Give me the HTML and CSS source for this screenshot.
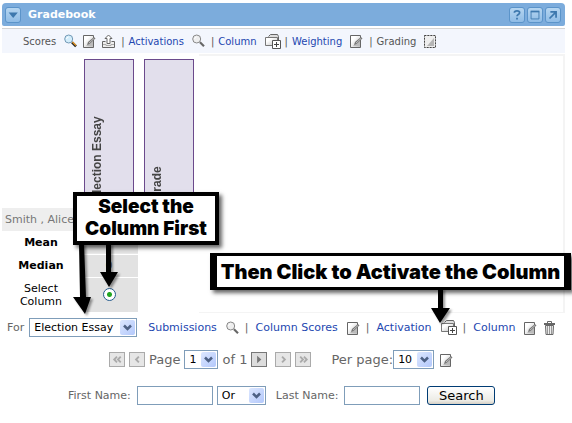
FILE: index.html
```html
<!DOCTYPE html>
<html lang="en">
<head>
<meta charset="utf-8">
<title>Gradebook</title>
<link rel="stylesheet" href="styles.css">
</head>
<body>
<svg class="defs" aria-hidden="true">
  <defs>
    <linearGradient id="sheen" x1="0" y1="0" x2="1" y2="1"><stop offset="0.3" stop-color="#fff"/><stop offset="1" stop-color="#bbb"/></linearGradient>
    <symbol id="find" viewBox="0 0 13 14"><circle cx="4.7" cy="5" r="4" fill="#eee" stroke="#888"/><path d="M2.5 5a2.5 2.5 0 0 1 2-2" fill="none" stroke="#fff"/><path d="M8 8.300l4 4" stroke="#666" stroke-width="2.200"/></symbol>
    <symbol id="find-color" viewBox="0 0 13 14"><circle cx="4.700" cy="5" r="4" fill="#d3edfb" stroke="#7399b5"/><path d="M2.500 5a2.500 2.500 0 0 1 2-2" fill="none" stroke="#fff"/><path d="M8 8.300l4 4" stroke="#222" stroke-width="2.400"/><path d="M8.500 8l3.500 3.500" stroke="#e89a28" stroke-width="1.300"/></symbol>
    <symbol id="edit" viewBox="0 0 13 14"><path d="M.5 1.500h10v12h-10z" fill="url(#sheen)" stroke="#666"/><path d="M3 12l7-7v7z" fill="#bbb"/><path d="M4 11l1-3 6-5 1.500 1.500-6 5.500z" fill="#777"/><path d="M6 9l5-4.500" stroke="#ddd" stroke-width=".7"/></symbol>
    <symbol id="edit-off" viewBox="0 0 13 14"><path d="M.5 1.500h11v12h-11z" fill="#eee" stroke="#aaa"/><path d="M.5 1.500h11v12h-11z" fill="none" stroke="#444" stroke-dasharray="1.500 1.500"/><path d="M3 12l7-8v8z" fill="#b5b5b5"/></symbol>
    <symbol id="export" viewBox="0 0 13 14"><path d="M3.500 7.500h-3v6h12v-6h-3" fill="#eee" stroke="#666"/><path d="M1 10.500h3v1h5v-1h3" fill="none" stroke="#aaa"/><path d="M5 9.500v-5H3L6.500 1 10 4.500H8v5z" fill="#fff" stroke="#666"/></symbol>
    <symbol id="add-column" viewBox="0 0 16 15"><path d="M3.500 2.500l2-2h7l1 2v6" fill="#ddd" stroke="#666"/><path d="M.5 3.500h12v8H.5z" fill="url(#sheen)" stroke="#777"/><path d="M7.500 6.500h8v8h-8z" fill="#fff" stroke="#555"/><path d="M11.500 8v5M9 10.500h5" stroke="#444"/></symbol>
    <symbol id="trash" viewBox="0 0 11 14"><path d="M1.500 4.500h8l-.5 9H2z" fill="#eee" stroke="#666"/><path d="M0 3h11" stroke="#666" stroke-width="2"/><path d="M3.500 2.500v-2h4v2" fill="none" stroke="#666"/><path d="M3.500 5v8M5.500 5v8M7.500 5v8" stroke="#999"/></symbol>
    <symbol id="chevron" viewBox="0 0 15 15"><path d="M4 5.500l3.500 3.500L11 5.500" fill="none" stroke="#4d6185" stroke-width="2.500"/></symbol>
  </defs>
</svg>
<main class="gradebook">
  <header class="titlebar">
    <button class="tile" aria-label="Menu"><svg viewBox="0 0 16 16"><path d="M3 5h10.500L8.200 11.500z" fill="#3d78ae"/></svg></button>
    <h1>Gradebook</h1>
    <button class="tile" aria-label="Help"><svg viewBox="0 0 16 16"><path d="M5 5.500c0-3 6-3 6 0 0 2-3 2-3 4M8 11v2" fill="none" stroke="#3d78ae" stroke-width="2"/></svg></button>
    <button class="tile" aria-label="Maximize"><svg viewBox="0 0 16 16"><path d="M3.500 4v8.500h9V4" fill="none" stroke="#3d78ae"/><path d="M3 4h10" stroke="#3d78ae" stroke-width="2"/></svg></button>
    <button class="tile" aria-label="Open in window"><svg viewBox="0 0 16 16"><path d="M5 4.500h6.500V11M11 5l-7 7" fill="none" stroke="#3d78ae" stroke-width="2"/></svg></button>
  </header>

  <nav class="toolbar">
    <span>Scores</span>
    <svg class="icon"><use href="#find-color"/></svg>
    <svg class="icon"><use href="#edit"/></svg>
    <svg class="icon"><use href="#export"/></svg>
    <span class="bar">|</span><a href="#">Activations</a>
    <svg class="icon"><use href="#find"/></svg>
    <span class="bar">|</span><a href="#">Column</a>
    <svg class="icon wide"><use href="#add-column"/></svg>
    <span class="bar">|</span><a href="#">Weighting</a>
    <svg class="icon"><use href="#edit"/></svg>
    <span class="bar">|</span><span>Grading</span>
    <svg class="icon"><use href="#edit-off"/></svg>
  </nav>

  <section class="grades">
    <table>
      <thead>
        <tr><td></td><th><div class="column-head">Election Essay</div></th><th><div class="column-head">Grade</div></th></tr>
      </thead>
      <tbody>
        <tr class="student"><th>Smith , Alice</th><td></td><td></td></tr>
        <tr><th>Mean</th><td class="shade"></td><td></td></tr>
        <tr><th>Median</th><td class="shade">0</td><td></td></tr>
        <tr class="pick"><th><label for="pick">Select<br>Column</label></th><td class="shade"><input type="radio" id="pick" checked></td><td></td></tr>
      </tbody>
    </table>
    <div class="scroll-area"></div>
  </section>

  <div class="actions">
    <label for="for">For</label>
    <span class="select essay"><select id="for"><option>Election Essay</option></select><svg><use href="#chevron"/></svg></span>
    <a class="first" href="#">Submissions</a>
    <svg class="icon"><use href="#find"/></svg>
    <span>|</span><a href="#">Column Scores</a>
    <svg class="icon"><use href="#edit"/></svg>
    <span>|</span><a href="#">Activation</a>
    <svg class="icon wide"><use href="#add-column"/></svg>
    <span>|</span><a href="#">Column</a>
    <svg class="icon"><use href="#edit"/></svg>
    <svg class="icon"><use href="#trash"/></svg>
  </div>

  <div class="pager">
    <button class="step" aria-label="First page" disabled><svg viewBox="0 0 14 14"><path d="M7 4L4 7l3 3M11 4L8 7l3 3"/></svg></button>
    <button class="step" aria-label="Previous page" disabled><svg viewBox="0 0 14 14"><path d="M9 4L6 7l3 3"/></svg></button>
    <label for="page">Page</label>
    <span class="select page"><select id="page"><option>1</option></select><svg><use href="#chevron"/></svg></span>
    <span>of 1</span>
    <button class="step go" aria-label="Go"><svg viewBox="0 0 14 14"><path d="M5 3v8L9.500 7z"/></svg></button>
    <button class="step next" aria-label="Next page" disabled><svg viewBox="0 0 14 14"><path d="M6 4l3 3-3 3"/></svg></button>
    <button class="step" aria-label="Last page" disabled><svg viewBox="0 0 14 14"><path d="M4 4l3 3-3 3M8 4l3 3-3 3"/></svg></button>
    <label class="per" for="per">Per page:</label>
    <span class="select count"><select id="per"><option>10</option></select><svg><use href="#chevron"/></svg></span>
    <svg class="icon"><use href="#edit"/></svg>
  </div>

  <form class="search">
    <label for="first">First Name:</label>
    <input type="text" id="first">
    <span class="select join"><select aria-label="Match"><option>Or</option></select><svg><use href="#chevron"/></svg></span>
    <label class="last" for="last">Last Name:</label>
    <input type="text" id="last">
    <button type="button">Search</button>
  </form>

  <svg class="arrows" viewBox="0 0 572 423" aria-hidden="true">
    <path d="M79 243h5l2 54h5l-6 17-12-17h7z"/>
    <path d="M106 243h5v29h7l-9 15-9-15h6z"/>
    <path d="M438 288h5v20h7l-10 15-9-15h7z"/>
  </svg>
  <div class="callout select-note">Select the<br>Column First</div>
  <div class="callout click-note">Then Click to Activate the Column</div>
</main>
</body>
</html>
```
FILE: styles.css
```css
* { box-sizing: border-box; }

body {
  margin: 0;
  background: #fff;
  color: #666;
  font-family: "DejaVu Sans", Verdana, sans-serif;
  font-size: 11px;
}

a { color: #2347b0; text-decoration: none; }
button, input, select { font-family: inherit; }
.defs { position: absolute; width: 0; height: 0; }

.gradebook { position: relative; padding: 3px 7px 16px 2px; }

.titlebar {
  display: flex;
  align-items: center;
  gap: 2px;
  height: 23px;
  padding: 0 4px 0 3px;
  border-radius: 4px 4px 2px 2px;
  background: #7cacdc;
}
.titlebar h1 {
  flex: 1;
  margin: 0 0 0 5px;
  color: #fff;
  font-size: 11px;
}
.tile {
  width: 16px;
  height: 16px;
  padding: 0;
  border: 1px solid #5b94ca;
  border-radius: 3px;
  background: linear-gradient(#b5d5f0, #8fbce6);
}
.tile svg { display: block; width: 14px; height: 14px; }

.toolbar {
  display: flex;
  align-items: center;
  gap: 6px;
  height: 25px;
  margin-top: 2px;
  padding-left: 21px;
  border-top: 1px solid #d4d4d4;
  background: #f3f6fd;
  color: #555;
  font-size: 10px;
  white-space: nowrap;
}
.bar { margin-right: -2px; }
.icon { flex: none; width: 13px; height: 14px; }
.icon.wide { width: 16px; height: 15px; margin-right: -2px; }
a + .icon, span + .icon { margin-left: 2px; }

.grades { display: flex; margin-top: 1px; }
.grades table { flex: none; border-collapse: collapse; }
.grades td, .grades th { padding: 0; }
.grades thead th { padding: 5px 10px 2px 0; text-align: left; }
.column-head {
  width: 50px;
  height: 147px;
  padding: 4px;
  border: 1px solid #6b4a8c;
  background: #e2dfec;
  color: #444;
  font: bold 12px/16px "Liberation Sans", Arial, sans-serif;
  writing-mode: vertical-rl;
  transform: rotate(180deg);
}
/* Rotated by 180 degrees, so the text block is pushed to the far side. */
.grades tbody th {
  width: 82px;
  height: 23px;
  padding-right: 4px;
  color: #000;
  text-align: center;
  white-space: nowrap;
}
.grades .student th {
  padding-left: 3px;
  background: #eee;
  color: #777;
  font-weight: normal;
  text-align: left;
}
.grades .shade {
  padding-right: 10px;
  border-bottom: 1px solid #fff;
  background: linear-gradient(#e2e2e2, #e2e2e2) left / 54px 100% no-repeat;
  text-align: center;
}
.grades .pick th { height: 35px; font-weight: normal; line-height: 13px; }
.pick input {
  appearance: none;
  display: block;
  width: 13px;
  height: 13px;
  margin: 0 auto;
  border: 1px solid #245a8c;
  border-radius: 50%;
  background: radial-gradient(circle, #22a522 2px, #fff 3px);
}
.scroll-area {
  flex: 1;
  margin-left: -5px;
  border: solid #f4f4f4;
  border-width: 2px 2px 1px 0;
}

.actions, .pager, .search {
  display: flex;
  align-items: center;
  white-space: nowrap;
}
.actions { gap: 7px; padding-left: 5px; margin-top: 5px; height: 20px; }
.actions label { margin-right: -2px; }
.actions .first { margin-left: 4px; }
.actions .icon { margin-right: -1px; }
.pager { gap: 4px; padding-left: 107px; margin-top: 12px; height: 20px; font-size: 13px; }
.search { gap: 4px; padding-left: 66px; margin-top: 16px; height: 20px; }

.select { position: relative; flex: none; }
.select select {
  appearance: none;
  display: block;
  width: 100%;
  height: 19px;
  padding: 0 0 0 4px;
  border: 1px solid #7f9db9;
  border-radius: 0;
  background: #fff;
  color: #000;
  font-size: 11px;
}
.select svg {
  position: absolute;
  top: 2px;
  right: 2px;
  width: 15px;
  height: 15px;
  border-radius: 2px;
  background: linear-gradient(135deg, #dce7ff, #b3c8fb);
  pointer-events: none;
}
.essay { width: 108px; }
.page { width: 34px; }
.count { width: 41px; margin-left: -4px; }
.join { width: 49px; }

.step {
  flex: none;
  width: 16px;
  height: 15px;
  padding: 0;
  border: 1px solid #aaa;
  background: #e6e6e6;
}
.step svg { display: block; width: 14px; height: 13px; fill: none; stroke: #aaa; stroke-width: 2; }
.step.go { border-color: #777; background: #ddd; }
.step.go svg { fill: #777; stroke: none; }
.next { margin-left: 4px; }
.per { margin-left: 16px; }

.search input {
  width: 76px;
  height: 19px;
  padding: 0 3px;
  border: 1px solid #7f9db9;
}
.search label { margin-right: 2px; }
.search .last { margin-left: 6px; }
.search button {
  width: 68px;
  height: 19px;
  margin-left: 3px;
  padding: 0;
  border: 1px solid #003c74;
  border-radius: 3px;
  background: linear-gradient(#fff, #ecebe5 80%, #d6d0c5);
  color: #000;
  font-size: 13px;
  line-height: 16px;
}

.arrows {
  position: absolute;
  top: 0;
  left: 0;
  width: 572px;
  height: 423px;
  fill: #000;
  filter: drop-shadow(2px 2px 1px #0006);
  pointer-events: none;
}
.callout {
  position: absolute;
  border: 4px solid #000;
  background: #fff;
  box-shadow: 3px 3px 4px #0009;
  color: #000;
  font-family: Inter, "Arial Black", sans-serif;
  font-weight: 900;
  text-align: center;
  white-space: nowrap;
}
.select-note {
  top: 192px;
  left: 73px;
  width: 146px;
  height: 53px;
  font-size: 19px;
  line-height: 22px;
}
.click-note {
  top: 253px;
  left: 210px;
  width: 361px;
  height: 37px;
  border-width: 3px 7px;
  font-size: 20px;
  line-height: 32px;
}
```
